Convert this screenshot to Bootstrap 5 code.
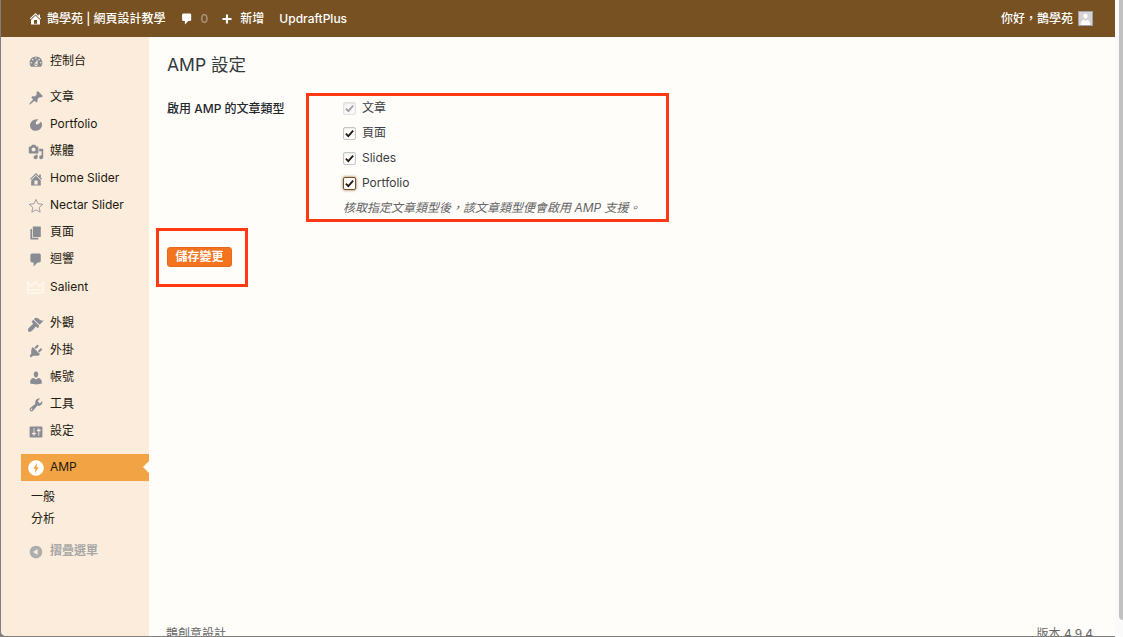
<!DOCTYPE html>
<html lang="zh-Hant">
<head>
<meta charset="utf-8">
<title>AMP 設定</title>
<link href="https://cdn.jsdelivr.net/npm/bootstrap@5.3.0/dist/css/bootstrap.min.css" rel="stylesheet">
<style>
html,body{height:637px;overflow:hidden;background:#7f7f7f;}
body{font-family:Inter,"Noto Sans CJK TC","Noto Sans",sans-serif;font-size:12px;line-height:1.4;color:#2a2a2a;}
.shell{height:637px;width:1123px;}
.frame{width:1114px;height:636px;margin-left:1px;background:#fffdfa;border-bottom-left-radius:5px;overflow:hidden;flex:none;}
.sbar{width:8px;background:#fafafa;flex:none;}
.sthumb{width:4px;height:620px;background:#c1c1c1;border-bottom-left-radius:4px;margin-left:4px;}
.topbar{height:37px;background:#775122;color:#fff;font-weight:500;flex-wrap:nowrap;padding:1px 22px 0 27px;}
.topbar svg{fill:#fff;display:block;}
.top-dim{color:#a9977f;}
.m4{margin-left:4px;}.m6{margin-left:6px;}.m7{margin-left:7px;}.m12{margin-left:12px;}.m14{margin-left:14px;}.m15{margin-left:15px;}
.hello{gap:5px;}
.ava{width:15px;height:15px;background:#d4d4d6;border:1px solid #a0a0a6;display:block;}
.ava svg{fill:#fff;width:13px;height:13px;}
.side{width:148px;background:#fbecdb;padding-top:11px;}
.side-item{height:27px;padding:0 0 0 28px;color:#231a12;gap:6px;}
.side-item svg{width:16px;height:16px;fill:#8a8c94;flex:none;margin-left:-1px;}
.gap-top{margin-top:9px;}
.tall{height:28px;padding-top:1px;}
.side-cur{background:#f2a344;margin-left:20px;padding-left:7px;position:relative;margin-top:9px;}
.side-cur::after{content:"";position:absolute;right:0;top:7px;border:6px solid transparent;border-right-color:#fffdfa;border-left:0;}
.side-cur svg{margin:0;}
.sub{padding:5px 0 0 30px;color:#231a12;}
.sub div{height:22px;display:flex;align-items:center;}
.fold{color:#a7a7a7;font-weight:600;margin-top:8px;}
.fold svg{fill:#adadad;}
.side-item .crown{fill:none;stroke:#fff8ee;stroke-width:1.8;width:17px;height:15px;margin-left:-2px;margin-right:0;}
.side-item .star{fill:none;stroke:#8a8c94;stroke-width:1;}
.cur-disc{fill:#fff;}
.side-cur svg .cur-bolt{fill:#f2a344;}
.wrap{position:relative;padding:0 0 0 18px;min-width:0;}
.head{font-size:17.5px;font-weight:400;color:#34393e;margin:16px 0 0;line-height:24px;height:24px;}
.field{margin-top:19px;}
.lab{width:176px;font-weight:500;line-height:20px;color:#23282d;padding-top:3px;}
.opt{height:25px;gap:6px;color:#3c3f43;}
.form-check-input.cbx{width:13px;height:13px;margin:0;border:1px solid #c5c5c5;border-radius:2px;background-color:#fff;background-size:11px 11px;background-position:center;box-shadow:inset 0 1px 2px rgba(0,0,0,.1);opacity:1;float:none;}
.form-check-input.cbx:checked{background-color:#fff;border-color:#c5c5c5;background-image:url("data:image/svg+xml,%3csvg xmlns='http://www.w3.org/2000/svg' viewBox='0 0 12 12'%3e%3cpath fill='none' stroke='%23251a12' stroke-width='2' d='M2 6.2l2.7 2.7L10 2.8'/%3e%3c/svg%3e");}
.form-check-input.cbx:disabled{background-color:#fafafa;background-image:url("data:image/svg+xml,%3csvg xmlns='http://www.w3.org/2000/svg' viewBox='0 0 12 12'%3e%3cpath fill='none' stroke='%23a5a0a0' stroke-width='2' d='M2 6.2l2.7 2.7L10 2.8'/%3e%3c/svg%3e");border-color:#e3e0dd;}
.form-check-input.cbx.foc{border-color:#775122;box-shadow:0 0 3px rgba(119,81,34,.9);}
.hint{font-style:italic;color:#666;margin:0;line-height:24px;}
.btn.save{background:#f4731f;border:1px solid #e8691a;color:#fff;font-weight:700;font-size:12px;padding:0 7.5px;line-height:18px;height:20px;border-radius:3px;margin-top:27px;}
.ring{position:absolute;border:3px solid #ff3a12;pointer-events:none;}
.ring-a{left:157px;top:56px;width:363px;height:129px;}
.ring-b{left:7px;top:191px;width:92px;height:59px;}
.foot{padding:0 22px 0 0;margin-left:-1px;color:#666;height:10px;margin-top:auto;line-height:16px;overflow:hidden;align-items:flex-start;}
</style>
</head>
<body>
<div class="shell d-flex">
  <div class="frame d-flex flex-column">
    <nav class="navbar topbar d-flex align-items-center justify-content-between">
      <div class="d-flex align-items-center">
        <svg width="15" height="15" viewBox="0 0 20 20"><path d="M16 8.500l1.530 1.530-1.060 1.060L10 4.620l-6.470 6.470-1.060-1.060L10 2.500l4 4v-2h2v4zm-6-2.460l6 5.990V18H4v-5.970zM12 17v-5H8v5h4z"/></svg>
        <span class="m4">鵲學苑 | 網頁設計教學</span>
        <svg class="m14" width="14" height="14" viewBox="0 0 20 20"><path d="M5 2h9c1.100 0 2 .9 2 2v7c0 1.100-.9 2-2 2h-2l-5 5v-5H5c-1.100 0-2-.9-2-2V4c0-1.100.9-2 2-2z"/></svg>
        <span class="top-dim m7">0</span>
        <svg class="m12" width="14" height="14" viewBox="0 0 20 20"><path d="M17 7v3h-5v5H9v-5H4V7h5V2h3v5h5z" transform="translate(-.5 1.5)"/></svg>
        <span class="m6">新增</span>
        <span class="m15">UpdraftPlus</span>
      </div>
      <div class="d-flex align-items-center hello">
        <span>你好，鵲學苑</span>
        <span class="ava"><svg viewBox="0 0 20 20"><path d="M10 10.500c-2.400 0-3.200-3.300-3.200-4.600C6.800 3.800 8.200 2.500 10 2.500s3.200 1.300 3.200 3.400c0 1.300-.8 4.600-3.200 4.600zM2.500 20c0-4.600 2.800-7.500 5-8l2.500 2 2.500-2c2.200.5 5 3.400 5 8z"/></svg></span>
      </div>
    </nav>
    <div class="d-flex flex-grow-1" style="min-height:0">
      <aside class="side flex-shrink-0">
        <div class="side-item d-flex align-items-center"><svg viewBox="0 0 20 20"><path d="M3.760 16h12.480c1.100-1.370 1.760-3.110 1.760-5 0-4.420-3.580-8-8-8s-8 3.580-8 8c0 1.890.66 3.630 1.760 5zM10 4c.55 0 1 .45 1 1s-.45 1-1 1-1-.45-1-1 .45-1 1-1zM6 6c.55 0 1 .45 1 1s-.45 1-1 1-1-.45-1-1 .45-1 1-1zm8 0c.55 0 1 .45 1 1s-.45 1-1 1-1-.45-1-1 .45-1 1-1zm-5.370 5.550L12 7v6c0 1.100-.9 2-2 2s-2-.9-2-2c0-.57.24-1.080.63-1.450zM4 10c.55 0 1 .45 1 1s-.45 1-1 1-1-.45-1-1 .45-1 1-1zm12 0c.55 0 1 .45 1 1s-.45 1-1 1-1-.45-1-1 .45-1 1-1zm-5 3c0-.55-.45-1-1-1s-1 .45-1 1 .45 1 1 1 1-.45 1-1z"/></svg>控制台</div>
        <div class="side-item gap-top d-flex align-items-center"><svg viewBox="0 0 20 20"><path d="M10.440 3.020l1.820-1.820 6.360 6.350-1.830 1.820c-1.050-.68-2.480-.57-3.410.36l-.75.75c-.92.93-1.040 2.350-.35 3.410l-1.830 1.820-2.410-2.410-2.800 2.790c-.42.42-3.380 2.710-3.800 2.290s1.860-3.390 2.280-3.810l2.790-2.790L4.100 9.360l1.830-1.820c1.050.69 2.480.57 3.400-.36l.75-.75c.93-.92 1.050-2.350.36-3.410z"/></svg>文章</div>
        <div class="side-item d-flex align-items-center"><svg viewBox="0 0 20 20"><path d="M13 3.200c-1.400 1-2.900 2.500-3.300 4-.3 1.300.9 2.500 2.200 2.200 1.900-.4 3.300-2.300 4.100-3.800 1.700 1.800 2.200 4.800.9 7.200-1.500 2.900-4.300 4.400-7.400 4.400-3.900 0-7-2.800-7-6.600 0-4.800 5.800-9 10.500-7.400z"/></svg>Portfolio</div>
        <div class="side-item d-flex align-items-center"><svg viewBox="0 0 20 20"><path d="M13 11V4c0-.55-.45-1-1-1h-1.670L9 1H5L3.670 3H2c-.55 0-1 .45-1 1v7c0 .55.45 1 1 1h10c.55 0 1-.45 1-1zM7 4.500c1.380 0 2.500 1.120 2.500 2.500S8.380 9.500 7 9.500 4.500 8.380 4.500 7 5.620 4.500 7 4.500zM14 6h5v10.500c0 1.380-1.120 2.500-2.500 2.500S14 17.880 14 16.500s1.120-2.500 2.500-2.500c.17 0 .34.02.5.05V9h-3V6zm-4 8.050V13h2v3.500c0 1.380-1.120 2.500-2.500 2.500S7 17.880 7 16.500 8.120 14 9.500 14c.17 0 .34.02.5.05z"/></svg>媒體</div>
        <div class="side-item d-flex align-items-center"><svg viewBox="0 0 20 20"><path d="M16 8.500l1.530 1.530-1.060 1.060L10 4.620l-6.470 6.470-1.060-1.060L10 2.500l4 4v-2h2v4zm-6-2.460l6 5.990V18H4v-5.970zM12 17v-5H8v5h4z"/></svg>Home Slider</div>
        <div class="side-item d-flex align-items-center"><svg class="star" viewBox="0 0 20 20"><path d="M10 1.800l2.500 5.400 5.900.7-4.400 4 1.200 5.800-5.200-2.900-5.200 2.900 1.200-5.800-4.400-4 5.900-.7z"/></svg>Nectar Slider</div>
        <div class="side-item d-flex align-items-center"><svg viewBox="0 0 20 20"><path d="M6 15V2h10v13H6zm-1 1h8v2H3V5h2v11z"/></svg>頁面</div>
        <div class="side-item d-flex align-items-center"><svg viewBox="0 0 20 20"><path d="M5 2h9c1.100 0 2 .9 2 2v7c0 1.100-.9 2-2 2h-2l-5 5v-5H5c-1.100 0-2-.9-2-2V4c0-1.100.9-2 2-2z"/></svg>迴響</div>
        <div class="side-item tall d-flex align-items-center"><svg class="crown" viewBox="0 0 20 17"><path d="M1 15V3l4.500 4L10 2l4.500 5L19 3v12zM1 11.500h18"/></svg>Salient</div>
        <div class="side-item gap-top d-flex align-items-center"><svg viewBox="0 0 20 20"><path d="M14.480 11.060L7.410 3.990l1.500-1.500c.5-.56 2.300-.47 3.510.32 1.210.8 1.430 1.280 2.910 2.100 1.180.64 2.450 1.260 4.450.85zm-.71.71L6.700 4.700 4.930 6.470c-.39.39-.39 1.020 0 1.410l1.060 1.060c.39.39.39 1.030 0 1.420-.6.6-6.200 4.600-6.200 7.600 0 1 .9 1.900 1.900 1.900 3 0 7-5.600 7.600-6.200.39-.39 1.020-.39 1.410 0l1.060 1.060c.39.39 1.020.39 1.410 0z"/></svg>外觀</div>
        <div class="side-item d-flex align-items-center"><svg viewBox="0 0 20 20"><path d="M13.110 4.360L9.870 7.600 8 5.730l3.240-3.240c.35-.34 1.050-.2 1.560.32.52.51.66 1.210.31 1.550zm-8 1.770l.91-1.120 9.010 9.010-1.190.84c-.71.71-2.630 1.160-3.820 1.160H6.140L4.900 17.260c-.59.59-1.540.59-2.120 0-.59-.58-.59-1.530 0-2.120l1.240-1.240v-3.880c0-1.130.4-3.190 1.090-3.890zm7.260 3.970l3.240-3.240c.34-.35 1.040-.21 1.550.31.52.51.66 1.210.31 1.550l-3.240 3.250z"/></svg>外掛</div>
        <div class="side-item d-flex align-items-center"><svg viewBox="0 0 20 20"><path d="M10 9.250c-2.270 0-2.730-3.440-2.730-3.440C7 4.020 7.820 2 9.970 2c2.160 0 2.980 2.020 2.710 3.810 0 0-.41 3.440-2.680 3.440zm0 2.570L12.720 10c2.390 0 4.520 2.330 4.520 4.530v2.490s-3.650 1.130-7.240 1.130c-3.650 0-7.240-1.130-7.240-1.130v-2.490c0-2.250 1.940-4.480 4.470-4.480z"/></svg>帳號</div>
        <div class="side-item d-flex align-items-center"><svg viewBox="0 0 20 20"><path d="M16.680 9.770c-1.340 1.340-3.300 1.670-4.950.99l-5.410 6.520c-.99.99-2.590.99-3.580 0s-.99-2.590 0-3.570l6.520-5.420c-.68-1.650-.35-3.610.99-4.950 1.280-1.280 3.120-1.620 4.720-1.060l-2.890 2.890 2.820 2.820 2.860-2.870c.53 1.580.18 3.390-1.080 4.650zM3.810 16.210c.4.39 1.040.39 1.430 0 .4-.4.4-1.040 0-1.430-.39-.4-1.030-.4-1.430 0-.39.39-.39 1.030 0 1.430z"/></svg>工具</div>
        <div class="side-item d-flex align-items-center"><svg viewBox="0 0 20 20"><path d="M18 16V4c0-.55-.45-1-1-1H3c-.55 0-1 .45-1 1v12c0 .55.45 1 1 1h14c.55 0 1-.45 1-1zM8 11h1c.55 0 1 .45 1 1s-.45 1-1 1H8v1.500c0 .28-.22.5-.5.5s-.5-.22-.5-.5V13H6c-.55 0-1-.45-1-1s.45-1 1-1h1V5.500c0-.28.22-.5.5-.5s.5.22.5.5V11zm5-2h-1c-.55 0-1-.45-1-1s.45-1 1-1h1V5.500c0-.28.22-.5.5-.5s.5.22.5.5V7h1c.55 0 1 .45 1 1s-.45 1-1 1h-1v5.500c0 .28-.22.5-.5.5s-.5-.22-.5-.5V9z"/></svg>設定</div>
        <div class="side-item side-cur d-flex align-items-center"><svg viewBox="0 0 20 20"><circle class="cur-disc" cx="10" cy="10" r="9.800"/><path class="cur-bolt" d="M11.300 3.500L6.600 10.800h2.700l-.7 5.700 4.800-7.400h-2.800z"/></svg>AMP</div>
        <div class="sub"><div>一般</div><div>分析</div></div>
        <div class="side-item fold d-flex align-items-center"><svg viewBox="0 0 20 20"><path d="M10 2.160c4.330 0 7.840 3.510 7.840 7.840s-3.510 7.840-7.840 7.840S2.160 14.330 2.160 10 5.710 2.160 10 2.160zm2 11.720V6.120L6.180 9.970z"/></svg>摺疊選單</div>
      </aside>
      <main class="wrap flex-grow-1 d-flex flex-column">
        <h1 class="head">AMP 設定</h1>
        <div class="field d-flex">
          <div class="lab">啟用 AMP 的文章類型</div>
          <div>
            <label class="opt d-flex align-items-center"><input class="form-check-input cbx" type="checkbox" checked disabled>文章</label>
            <label class="opt d-flex align-items-center"><input class="form-check-input cbx" type="checkbox" checked>頁面</label>
            <label class="opt d-flex align-items-center"><input class="form-check-input cbx" type="checkbox" checked>Slides</label>
            <label class="opt d-flex align-items-center"><input class="form-check-input cbx foc" type="checkbox" checked>Portfolio</label>
            <p class="hint">核取指定文章類型後，該文章類型便會啟用 AMP 支援。</p>
          </div>
        </div>
        <div><button class="btn save" type="button">儲存變更</button></div>
        <div class="ring ring-a"></div>
        <div class="ring ring-b"></div>
        <footer class="foot d-flex justify-content-between"><span>鵲創意設計</span><span>版本 4.9.4</span></footer>
      </main>
    </div>
  </div>
  <div class="sbar"><div class="sthumb"></div></div>
</div>
</body>
</html>
